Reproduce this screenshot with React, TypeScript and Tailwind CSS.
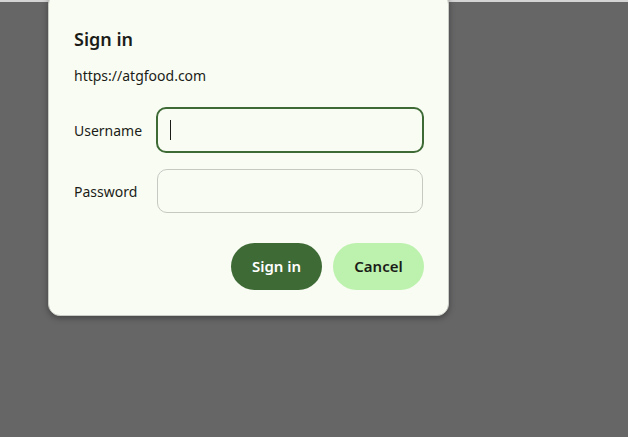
// Browser-style basic auth prompt over a dimmed page

const font = { fontFamily: '"Noto Sans", "Open Sans", "Liberation Sans", sans-serif' };

export default function App() {
    return (
        <div className="relative h-[437px] w-[628px] overflow-hidden bg-[#666666]" style={font}>
            {/* thin strip left over from the page behind the overlay */}
            <div className="h-[2px] w-full bg-[#d4d4d4]" />

            {/* Sign-in dialog */}
            <div className="absolute left-[48px] top-[-8px] flex w-[401px] flex-col rounded-[12px] border border-[#c9ccc4] bg-[#f9fcf3] pb-[25px] pl-[25px] pr-[24px] pt-[34px] shadow-[0_2px_6px_rgba(0,0,0,0.35)]">
                <h1 className="text-[18px] font-semibold leading-[24px] text-[#1b1c18]">Sign in</h1>
                <p className="mt-[15px] text-[14px] leading-[20px] text-[#1b1c18]">https://atgfood.com</p>

                <div className="mt-[21px] flex h-[46px] items-center">
                    <label className="w-[82px] text-[14px] text-[#1b1c18]">Username</label>
                    <div className="flex h-[46px] w-[268px] items-center rounded-[10px] border-2 border-[#3e6a35] bg-[#f9fcf3] pl-[12px]">
                        <span className="h-[20px] w-px bg-[#1b1c18]" />
                    </div>
                </div>

                <div className="mt-[15px] flex h-[46px] items-center">
                    <label className="w-[83px] text-[14px] text-[#1b1c18]">Password</label>
                    <div className="h-[44px] w-[266px] rounded-[10px] border border-[#c6c8c2] bg-[#f9fcf3]" />
                </div>

                <div className="mt-[29px] flex justify-end gap-[11px]">
                    <button className="h-[47px] w-[91px] rounded-full bg-[#3e6a35] text-[15px] font-semibold text-white">
                        Sign in
                    </button>
                    <button className="h-[47px] w-[91px] rounded-full bg-[#bcf2ad] text-[15px] font-semibold text-[#1b1c18]">
                        Cancel
                    </button>
                </div>
            </div>
        </div>
    );
}
